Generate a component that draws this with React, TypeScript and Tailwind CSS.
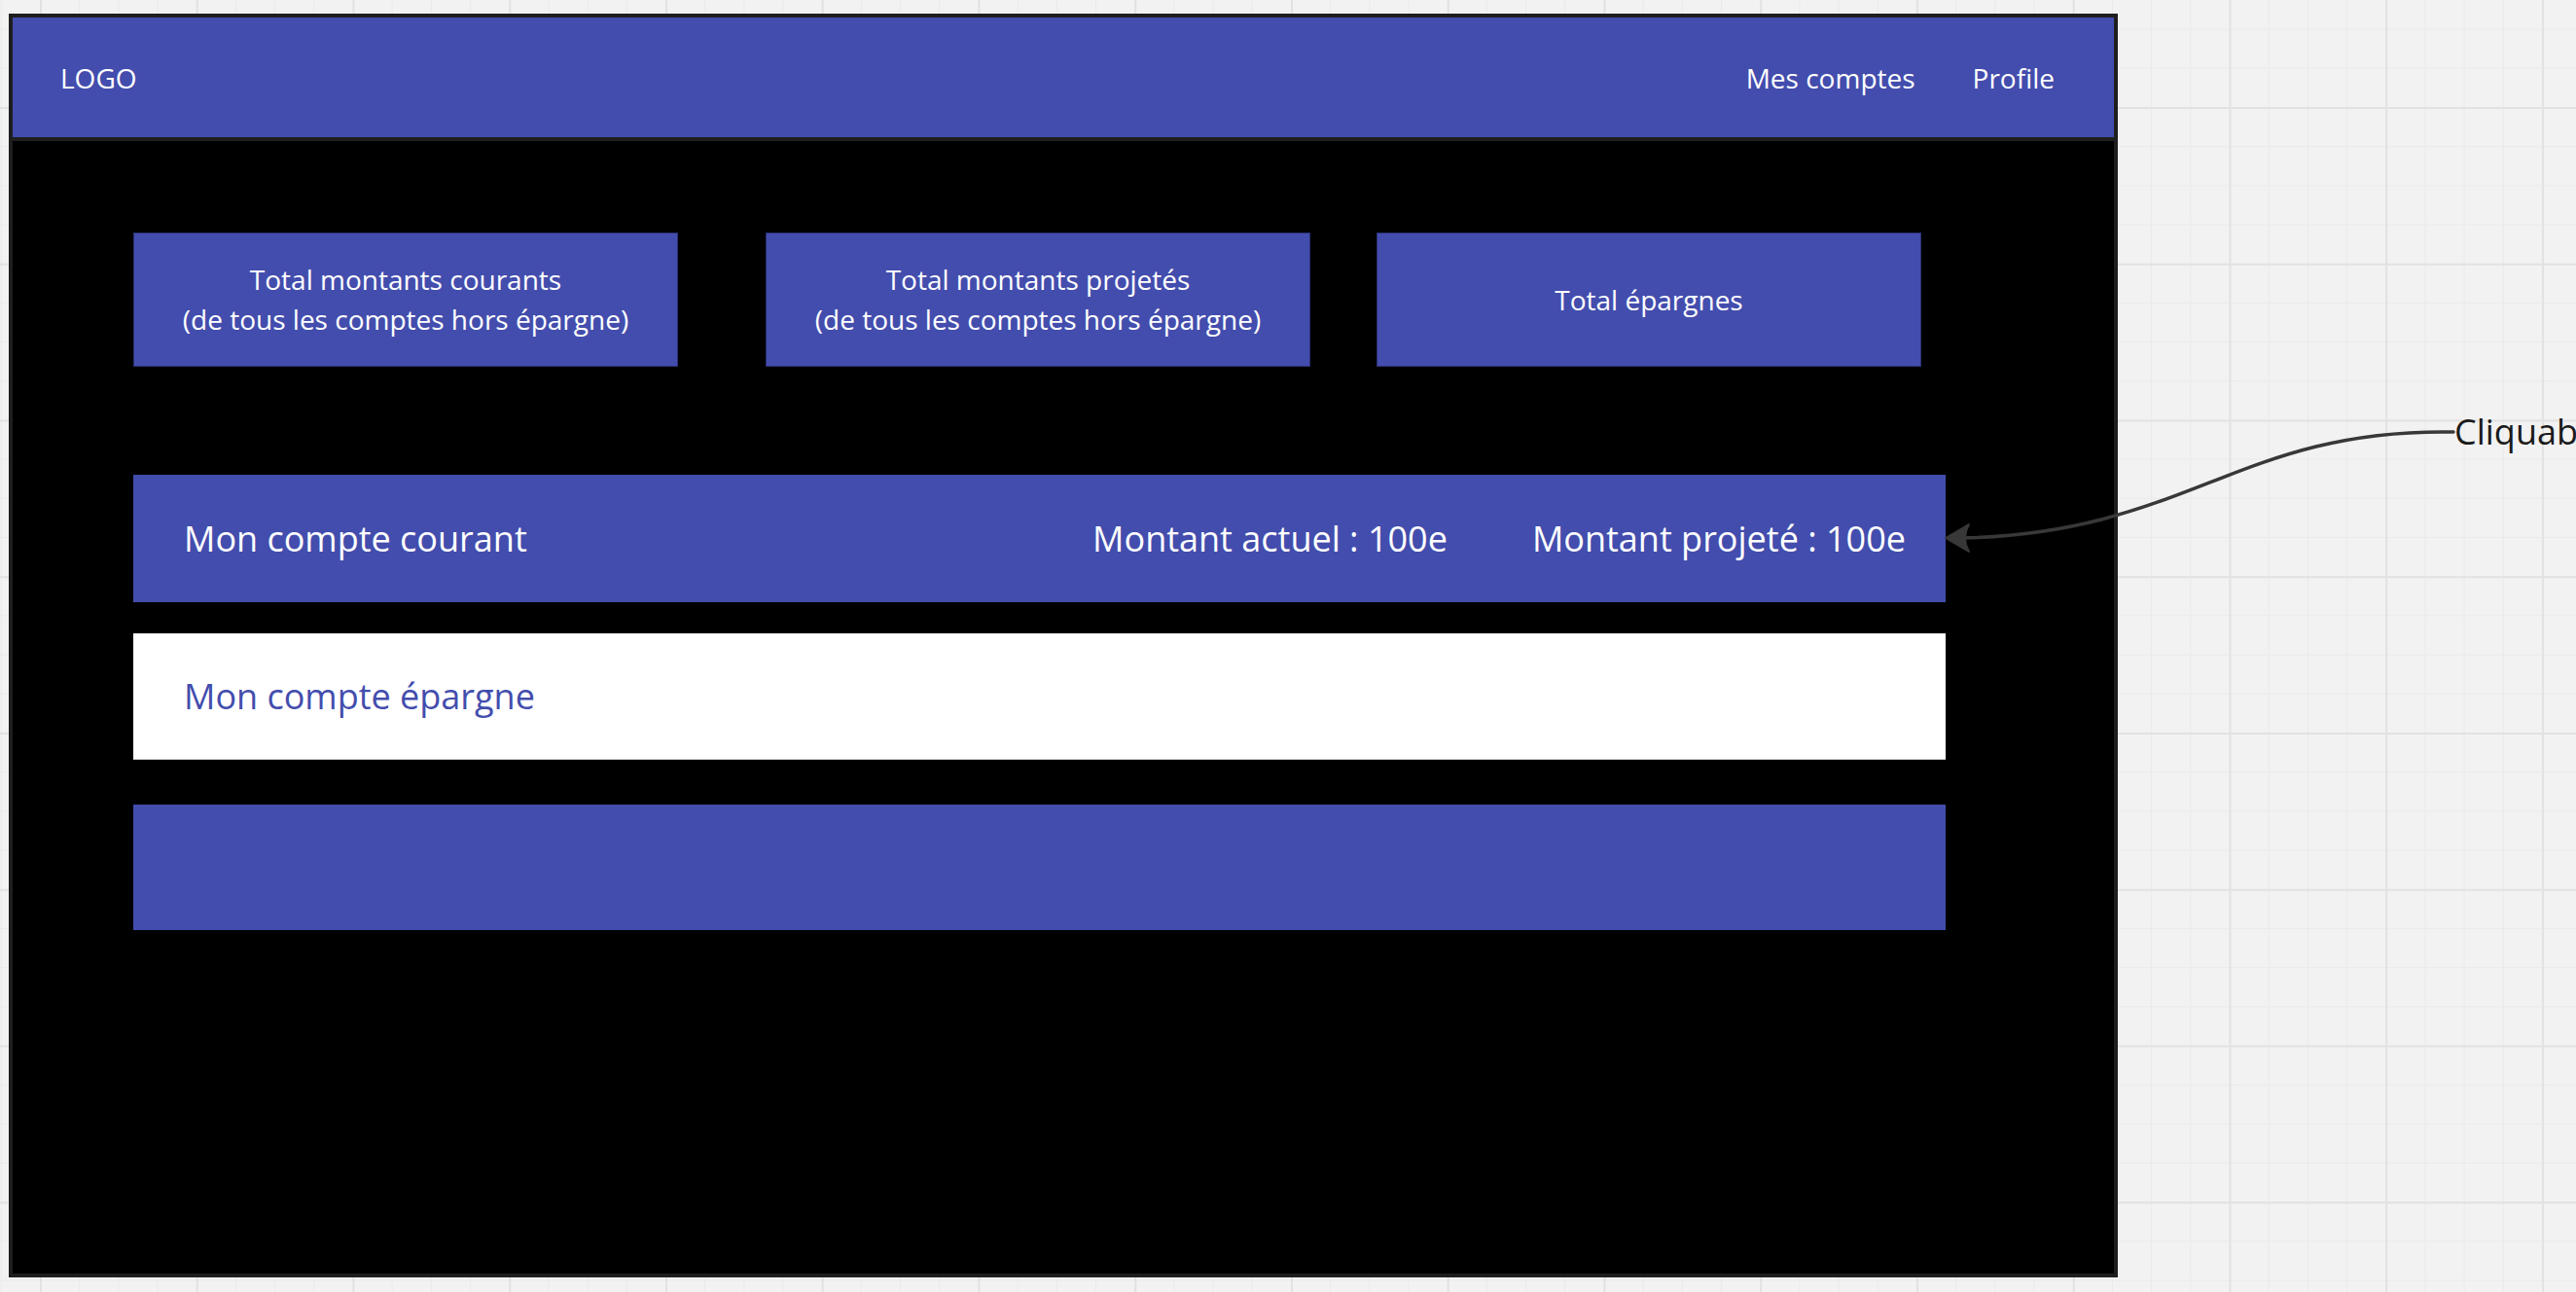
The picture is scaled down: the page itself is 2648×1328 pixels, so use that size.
import React from "react";

function SummaryBox({ lines, className }: { lines: string[]; className?: string }) {
  return (
    <div
      className={
        "w-[560px] h-[138px] bg-[#434dad] border border-[#2a3070] flex flex-col items-center justify-center text-center text-white text-[28px] leading-[41px] " +
        (className ?? "")
      }
    >
      {lines.map((l) => (
        <span key={l}>{l}</span>
      ))}
    </div>
  );
}

export default function App() {
  return (
    <div className="relative w-[2648px] h-[1328px] overflow-hidden font-['Open_Sans',sans-serif] bg-[#f2f2f2] bg-[linear-gradient(to_right,#e2e2e2_2px,transparent_2px),linear-gradient(to_bottom,#e2e2e2_2px,transparent_2px),linear-gradient(to_right,#eaeaea_1px,transparent_1px),linear-gradient(to_bottom,#eaeaea_1px,transparent_1px)] bg-size-[160.75px_160.75px,160.75px_160.75px,40.1875px_40.1875px,40.1875px_40.1875px] bg-position-[41px_110px,41px_110px,0.8px_29.6px,0.8px_29.6px] pl-[9px] pt-[14px]">
      {/* Frame */}
      <div className="w-[2168px] h-[1299px] border-4 border-[#1e1e1e] bg-black flex flex-col">
        <header className="h-[127px] shrink-0 bg-[#434dad] border-b-4 border-[#1f1f1f] flex items-center justify-between pl-[49px] pr-[61px] text-white text-[28px]">
          <span>LOGO</span>
          <nav className="flex items-center gap-[59px]">
            <span>Mes comptes</span>
            <span>Profile</span>
          </nav>
        </header>

        <main className="pl-[124px] pt-[94px] flex flex-col">
          <div className="flex">
            <SummaryBox
              lines={["Total montants courants", "(de tous les comptes hors épargne)"]}
              className="mr-[90px]"
            />
            <SummaryBox
              lines={["Total montants projetés", "(de tous les comptes hors épargne)"]}
              className="mr-[68px]"
            />
            <SummaryBox lines={["Total épargnes"]} />
          </div>

          <div className="mt-[111px] w-[1863px] h-[131px] bg-[#434dad] flex items-center justify-between pl-[52px] pr-[41px] text-white text-[36px]">
            <span>Mon compte courant</span>
            <div className="flex items-center gap-[87px]">
              <span>Montant actuel : 100e</span>
              <span>Montant projeté : 100e</span>
            </div>
          </div>

          <div className="mt-[32px] w-[1863px] h-[130px] bg-white border-b border-[#c8c8c8] flex items-center pl-[52px] text-[#434dad] text-[36px]">
            <span>Mon compte épargne</span>
          </div>

          <div className="mt-[46px] w-[1863px] h-[129px] bg-[#434dad]" />
        </main>
      </div>

      {/* Annotation connector */}
      <svg
        className="absolute left-0 top-0 pointer-events-none"
        width="2648"
        height="1328"
        viewBox="0 0 2648 1328"
      >
        <path
          d="M2522,444 C2300,440 2250,548 2016,553"
          fill="none"
          stroke="#383838"
          strokeWidth="3.5"
          strokeLinecap="round"
        />
        <path
          d="M2000,553 L2024,539 Q2016,553 2024,567 Z"
          fill="#383838"
          stroke="#383838"
          strokeWidth="2"
          strokeLinejoin="round"
        />
      </svg>

      <span className="absolute left-[2523px] top-[426px] text-[36px] leading-[36px] text-[#1a1a1a] whitespace-nowrap">
        Cliquable
      </span>
    </div>
  );
}
